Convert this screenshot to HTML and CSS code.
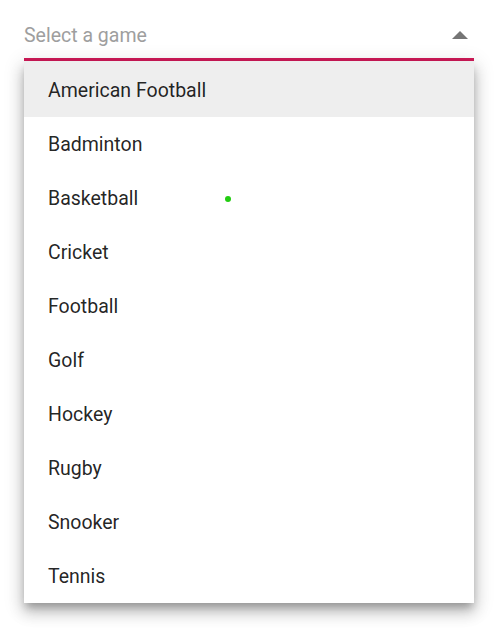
FILE: index.html
```html
<!DOCTYPE html>
<html lang="en">
<head>
    <meta charset="UTF-8">
    <title>Select a game</title>
    <link rel="stylesheet" href="styles.css">
</head>
<body>
    <div class="dropdown">
        <div class="input-wrap">
            <span class="placeholder">Select a game</span>
            <span class="arrow"></span>
        </div>
        <ul class="popup">
            <li class="item item-active">American Football</li>
            <li class="item">Badminton</li>
            <li class="item">Basketball</li>
            <li class="item">Cricket</li>
            <li class="item">Football</li>
            <li class="item">Golf</li>
            <li class="item">Hockey</li>
            <li class="item">Rugby</li>
            <li class="item">Snooker</li>
            <li class="item">Tennis</li>
        </ul>
        <span class="cursor-dot"></span>
    </div>
</body>
</html>
```

FILE: styles.css
```css
html, body {
    height: 100%;
}

body {
    margin: 0;
    padding: 0 30px 0 24px;
    font-family: Roboto, "Liberation Sans", sans-serif;
    background-color: #ffffff;
}

.dropdown {
    position: relative;
    width: 450px;
}

.input-wrap {
    display: flex;
    align-items: center;
    justify-content: space-between;
    height: 61px;
    padding-top: 12px;
    box-sizing: border-box;
    border-bottom: 3px solid #d01a58;
}

.placeholder {
    font-size: 19.5px;
    color: #9e9e9e;
}

.arrow {
    width: 0;
    height: 0;
    margin-right: 6px;
    border-left: 8px solid transparent;
    border-right: 8px solid transparent;
    border-bottom: 8px solid #757575;
}

.popup {
    list-style: none;
    margin: 0;
    padding: 0;
    background-color: #ffffff;
    box-shadow: 0 6px 8px -2px rgba(0,0,0,0.25), 0 10px 14px 1px rgba(0,0,0,0.14), 0 4px 18px 3px rgba(0,0,0,0.12);
}

.item {
    height: 54px;
    line-height: 56px;
    padding-left: 24px;
    font-size: 19.5px;
    color: rgba(0,0,0,0.87);
}

.item-active {
    height: 56px;
    line-height: 60px;
    background-color: #eeeeee;
}

.cursor-dot {
    position: absolute;
    left: 201px;
    top: 196px;
    width: 6px;
    height: 6px;
    border-radius: 50%;
    background-color: #22cc11;
}
```
